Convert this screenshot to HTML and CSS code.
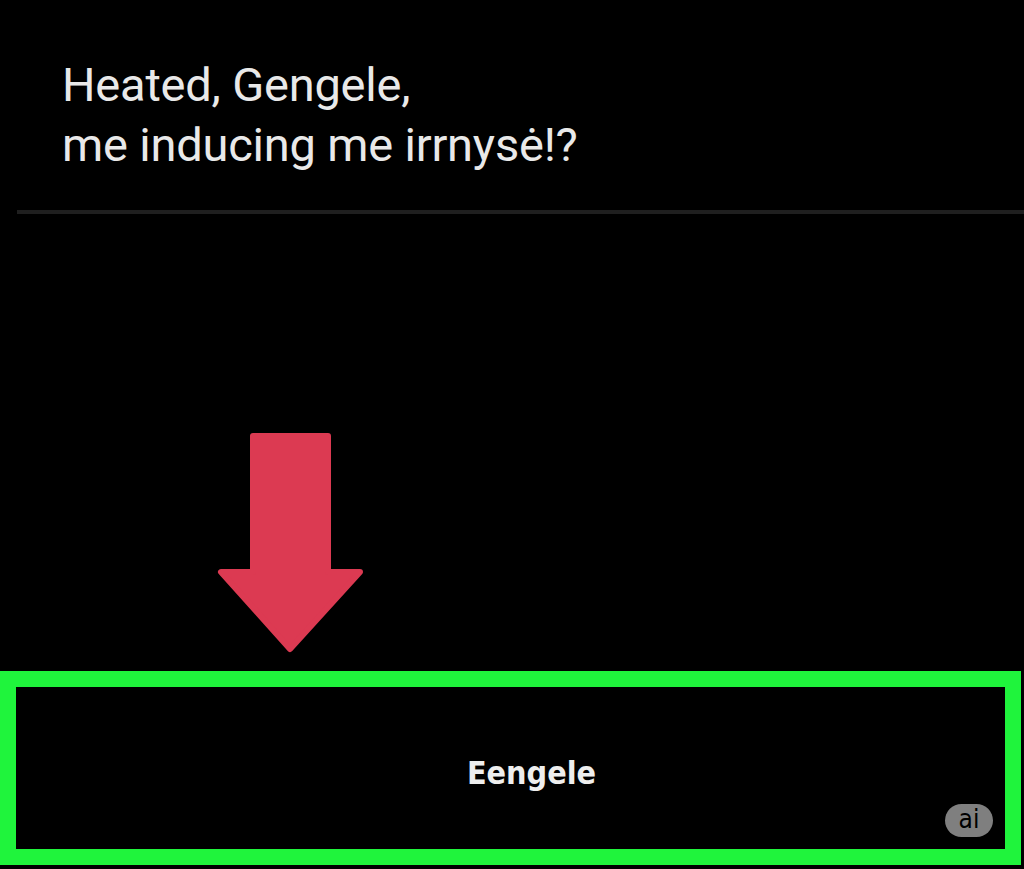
FILE: index.html
```html
<!DOCTYPE html>
<html lang="en">
<head>
    <meta charset="UTF-8">
    <title>Gengele</title>
    <link rel="stylesheet" href="styles.css">
</head>
<body>
    <div class="page">
        <div class="prompt">
            <p class="prompt-text">Heated, Gengele,<br>me inducing me irrnysė!?</p>
        </div>
        <div class="rule"></div>

        <div class="stage">
            <svg class="arrow" width="151" height="225" viewBox="-3 -3 151 225">
                <path d="M35 3 H110 V139 H142 L72 216 L3 139 H35 Z" fill="#dc3a52" stroke="#dc3a52" stroke-width="6" stroke-linejoin="round"/>
            </svg>
        </div>

        <div class="action">
            <span class="action-label">Eengele</span>
            <span class="badge">ai</span>
        </div>
    </div>
</body>
</html>
```

FILE: styles.css
```css
body {
    margin: 0;
    padding: 0;
    background: #000;
    font-family: Roboto, 'Noto Sans', sans-serif;
}

.page {
    height: 869px;
    display: flex;
    flex-direction: column;
}

.prompt {
    height: 210px;
    padding-left: 62px;
    box-sizing: border-box;
    padding-top: 55px;
}

.prompt-text {
    margin: 0;
    color: #e9e9e9;
    font-size: 47px;
    line-height: 60px;
    letter-spacing: -0.2px;
}

.rule {
    height: 4px;
    margin-left: 17px;
    background-color: #1f1f1f;
}

.stage {
    flex: 1;
    padding-left: 215px;
    padding-top: 216px;
    box-sizing: border-box;
}

.arrow {
    display: block;
}

.action {
    position: relative;
    height: 194px;
    margin-right: 3px;
    margin-bottom: 4px;
    box-sizing: border-box;
    border: 16px solid #1ff43c;
    display: flex;
    align-items: center;
    justify-content: center;
}

.action-label {
    color: #eeeeee;
    font-family: 'DejaVu Sans Condensed', 'DejaVu Sans', sans-serif;
    font-stretch: condensed;
    font-weight: 700;
    font-size: 32px;
    margin-left: 42px;
    margin-top: 10px;
}

.badge {
    position: absolute;
    right: 12px;
    bottom: 12px;
    width: 48px;
    height: 33px;
    border-radius: 17px;
    background-color: #7f7f7f;
    color: #000;
    font-family: 'DejaVu Sans Condensed', 'DejaVu Sans', sans-serif;
    font-stretch: condensed;
    font-size: 26px;
    line-height: 31px;
    text-align: center;
}
```
